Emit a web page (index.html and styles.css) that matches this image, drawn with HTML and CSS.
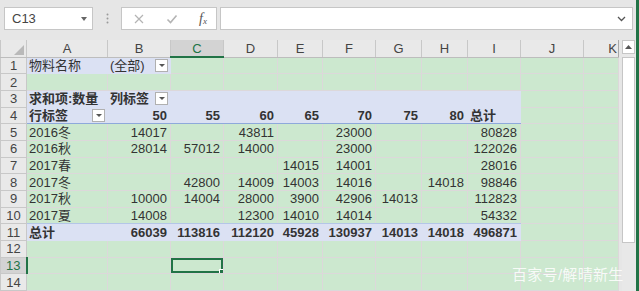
FILE: index.html
```html
<!DOCTYPE html>
<html lang="zh-CN">
  <head>
    <meta charset="UTF-8" />
    <title>数据透视表</title>
    <link rel="stylesheet" href="styles.css">
  </head>
  <body>
    <div class="app">
      <div class="toolbar">
        <div class="namebox">
          <span>C13</span>
          <span class="caret"></span>
        </div>
        <div class="dots">
          <svg width="3" height="11" viewBox="0 0 3 11"><circle cx="1.5" cy="1.5" r="1" fill="#9a9a9a"/><circle cx="1.5" cy="5.5" r="1" fill="#9a9a9a"/><circle cx="1.5" cy="9.5" r="1" fill="#9a9a9a"/></svg>
        </div>
        <div class="fxbox">
          <svg class="ico" width="12" height="12" viewBox="0 0 12 12"><path d="M2 2 L10 10 M10 2 L2 10" stroke="#b4b4b4" stroke-width="1.2" fill="none"/></svg>
          <svg class="ico" width="12" height="12" viewBox="0 0 12 12"><path d="M1.5 6.5 L4.5 9.5 L10.5 2.5" stroke="#b4b4b4" stroke-width="1.6" fill="none"/></svg>
          <span class="fx"><i>f</i><sub>x</sub></span>
        </div>
        <div class="formula">
          <svg class="chev" width="9" height="6" viewBox="0 0 9 6"><path d="M1 1 L4.5 4.5 L8 1" stroke="#555" stroke-width="1.3" fill="none"/></svg>
        </div>
      </div>

      <div class="main">
        <table class="sheet">
          <colgroup>
            <col style="width:26px"><col style="width:81px"><col style="width:63px"><col style="width:53px">
            <col style="width:54px"><col style="width:45px"><col style="width:53px"><col style="width:46px">
            <col style="width:46px"><col style="width:53px"><col style="width:63px"><col style="width:35px">
          </colgroup>
          <tr class="colhead">
            <th class="corner"><svg width="10" height="10" viewBox="0 0 10 10"><polygon points="10,0 10,10 0,10" fill="#b9b9b9"/></svg></th>
            <th>A</th><th>B</th><th class="sel">C</th><th>D</th><th>E</th><th>F</th><th>G</th><th>H</th><th>I</th><th>J</th><th class="kcol">K</th>
          </tr>
          <tr>
            <th class="rh">1</th>
            <td class="lav">物料名称</td><td class="lav dd-cell">(全部)<span class="dd"></span></td>
            <td></td><td></td><td></td><td></td><td></td><td></td><td></td><td></td><td></td>
          </tr>
          <tr>
            <th class="rh">2</th>
            <td></td><td></td><td></td><td></td><td></td><td></td><td></td><td></td><td></td><td></td><td></td>
          </tr>
          <tr>
            <th class="rh">3</th>
            <td class="lav b">求和项:数量</td><td class="lav b dd-cell">列标签<span class="dd"></span></td>
            <td class="lav"></td><td class="lav"></td><td class="lav"></td><td class="lav"></td><td class="lav"></td><td class="lav"></td><td class="lav"></td>
            <td></td><td></td>
          </tr>
          <tr class="pivot-head">
            <th class="rh">4</th>
            <td class="lav b dd-cell">行标签<span class="dd"></span></td>
            <td class="lav b num">50</td><td class="lav b num">55</td><td class="lav b num">60</td><td class="lav b num">65</td>
            <td class="lav b num">70</td><td class="lav b num">75</td><td class="lav b num">80</td><td class="lav b">总计</td>
            <td></td><td></td>
          </tr>
          <tr>
            <th class="rh">5</th>
            <td>2016冬</td><td class="num">14017</td><td></td><td class="num">43811</td><td></td><td class="num">23000</td><td></td><td></td><td class="num">80828</td>
            <td></td><td></td>
          </tr>
          <tr>
            <th class="rh">6</th>
            <td>2016秋</td><td class="num">28014</td><td class="num">57012</td><td class="num">14000</td><td></td><td class="num">23000</td><td></td><td></td><td class="num">122026</td>
            <td></td><td></td>
          </tr>
          <tr>
            <th class="rh">7</th>
            <td>2017春</td><td></td><td></td><td></td><td class="num">14015</td><td class="num">14001</td><td></td><td></td><td class="num">28016</td>
            <td></td><td></td>
          </tr>
          <tr>
            <th class="rh">8</th>
            <td>2017冬</td><td></td><td class="num">42800</td><td class="num">14009</td><td class="num">14003</td><td class="num">14016</td><td></td><td class="num">14018</td><td class="num">98846</td>
            <td></td><td></td>
          </tr>
          <tr>
            <th class="rh">9</th>
            <td>2017秋</td><td class="num">10000</td><td class="num">14004</td><td class="num">28000</td><td class="num">3900</td><td class="num">42906</td><td class="num">14013</td><td></td><td class="num">112823</td>
            <td></td><td></td>
          </tr>
          <tr class="pivot-last">
            <th class="rh">10</th>
            <td>2017夏</td><td class="num">14008</td><td></td><td class="num">12300</td><td class="num">14010</td><td class="num">14014</td><td></td><td></td><td class="num">54332</td>
            <td></td><td></td>
          </tr>
          <tr>
            <th class="rh">11</th>
            <td class="lav b">总计</td><td class="lav b num">66039</td><td class="lav b num">113816</td><td class="lav b num">112120</td><td class="lav b num">45928</td>
            <td class="lav b num">130937</td><td class="lav b num">14013</td><td class="lav b num">14018</td><td class="lav b num">496871</td>
            <td></td><td></td>
          </tr>
          <tr>
            <th class="rh">12</th>
            <td></td><td></td><td></td><td></td><td></td><td></td><td></td><td></td><td></td><td></td><td></td>
          </tr>
          <tr>
            <th class="rh sel">13</th>
            <td></td><td></td><td class="active"></td><td></td><td></td><td></td><td></td><td></td><td></td><td></td><td></td>
          </tr>
          <tr>
            <th class="rh">14</th>
            <td></td><td></td><td></td><td></td><td></td><td></td><td></td><td></td><td></td><td></td><td></td>
          </tr>
        </table>

        <div class="vscroll">
          <div class="up"><svg width="7" height="4" viewBox="0 0 7 4"><polygon points="0,4 7,4 3.5,0" fill="#555"/></svg></div>
          <div class="thumb"></div>
        </div>

        <div class="watermark">百家号/解晴新生</div>
      </div>
    </div>
  </body>
</html>
```

FILE: styles.css
```css
* {
  margin: 0;
  padding: 0;
  box-sizing: border-box;
}
body {
  width: 639px;
  height: 291px;
  overflow: hidden;
  background: #e6e6e6;
  font-family: "Liberation Sans", "Noto Sans CJK SC", sans-serif;
  color: #333;
}
.app {
  height: 291px;
  border-right: 3px solid #217346;
}

/* formula bar */
.toolbar {
  display: flex;
  height: 40px;
  padding: 7px 0 0 4px;
}
.namebox {
  display: flex;
  align-items: center;
  justify-content: space-between;
  width: 89px;
  height: 23px;
  padding: 0 5px 0 7px;
  background: #fff;
  border: 1px solid #c6c6c6;
  font-size: 13px;
  color: #444;
}
.caret {
  width: 0;
  height: 0;
  border-left: 3.5px solid transparent;
  border-right: 3.5px solid transparent;
  border-top: 4px solid #666;
}
.dots {
  display: flex;
  justify-content: center;
  align-items: center;
  width: 28px;
  height: 23px;
}
.fxbox {
  display: flex;
  align-items: center;
  justify-content: space-between;
  width: 96px;
  height: 23px;
  padding: 0 9px 0 11px;
  background: #fff;
  border: 1px solid #c6c6c6;
}
.fx {
  font-family: "Liberation Serif", serif;
  font-size: 14px;
  color: #555;
  font-style: italic;
  line-height: 1;
}
.fx sub {
  font-size: 9px;
  vertical-align: -1px;
}
.formula {
  display: flex;
  align-items: center;
  justify-content: flex-end;
  width: 413px;
  height: 23px;
  margin-left: 3px;
  padding-right: 6px;
  background: #fff;
  border: 1px solid #c6c6c6;
}

/* grid */
.main {
  position: relative;
  display: flex;
  height: 251px;
}
.sheet {
  width: 618px;
  table-layout: fixed;
  border-collapse: collapse;
  font-size: 13px;
  background: #cce8cf;
}
.sheet tr {
  height: 16.65px;
}
.sheet tr.colhead {
  height: 17px;
}
.sheet th {
  font-weight: normal;
  color: #444;
  background: #e9e9e9;
  border: 1px solid #c8c8c8;
  padding: 0;
  line-height: 15px;
}
.colhead th {
  border-top: none;
  border-bottom-color: #bdbdbd;
}
.colhead th.sel {
  background: #d3d3d3;
  color: #217346;
  border-bottom: 2px solid #217346;
}
.colhead th.kcol {
  text-align: right;
  padding-right: 1px;
  border-right: 1px solid #a8a8a8;
}
.corner {
  text-align: right;
  vertical-align: bottom;
}
.corner svg {
  display: block;
  margin: 0 2px 2px auto;
}
.rh {
  border-left: none;
  border-bottom-color: #d6d6d6;
  border-right-color: #bdbdbd;
}
.rh.sel {
  background: #d3d3d3;
  color: #217346;
  border-right: 2px solid #217346;
}
.sheet td {
  border: 1px solid #dcd8da;
  padding: 0 2px;
  line-height: 15px;
  white-space: nowrap;
  overflow: hidden;
}
.sheet td.lav {
  background: #dbe1f3;
  border-color: #dbe1f3;
}
.sheet td.num {
  text-align: right;
  padding-right: 3px;
}
.sheet td.b {
  font-weight: bold;
}
.pivot-head td.lav {
  border-bottom: 1px solid #8ea9db;
}
.pivot-last td:nth-child(-n+10) {
  border-bottom: 1px solid #b4c6e7;
}
.dd-cell {
  position: relative;
}
.dd {
  position: absolute;
  right: 2px;
  top: 1px;
  width: 13px;
  height: 13px;
  background: #fff;
  border: 1px solid #b0b0b0;
}
.dd::after {
  content: "";
  position: absolute;
  left: 3px;
  top: 4px;
  border-left: 3px solid transparent;
  border-right: 3px solid transparent;
  border-top: 3px solid #555;
}
.sheet td.active {
  position: relative;
  box-shadow: inset 0 0 0 2px #217346;
}
.active::after {
  content: "";
  position: absolute;
  right: -3px;
  bottom: -3px;
  width: 5px;
  height: 5px;
  background: #217346;
  border: 1px solid #fff;
}

/* scrollbar */
.vscroll {
  width: 15px;
  margin-left: 3px;
  background: #e8e8e8;
}
.up {
  display: flex;
  justify-content: center;
  align-items: center;
  width: 13px;
  height: 14px;
  background: #fff;
  border: 1px solid #c6c6c6;
}
.thumb {
  width: 13px;
  height: 186px;
  margin-top: 3px;
  background: #fff;
  border: 1px solid #c6c6c6;
}

.watermark {
  position: absolute;
  left: 512px;
  top: 223px;
  font-size: 15px;
  color: rgba(255, 255, 255, 0.85);
  letter-spacing: 0.3px;
  white-space: nowrap;
}
```
